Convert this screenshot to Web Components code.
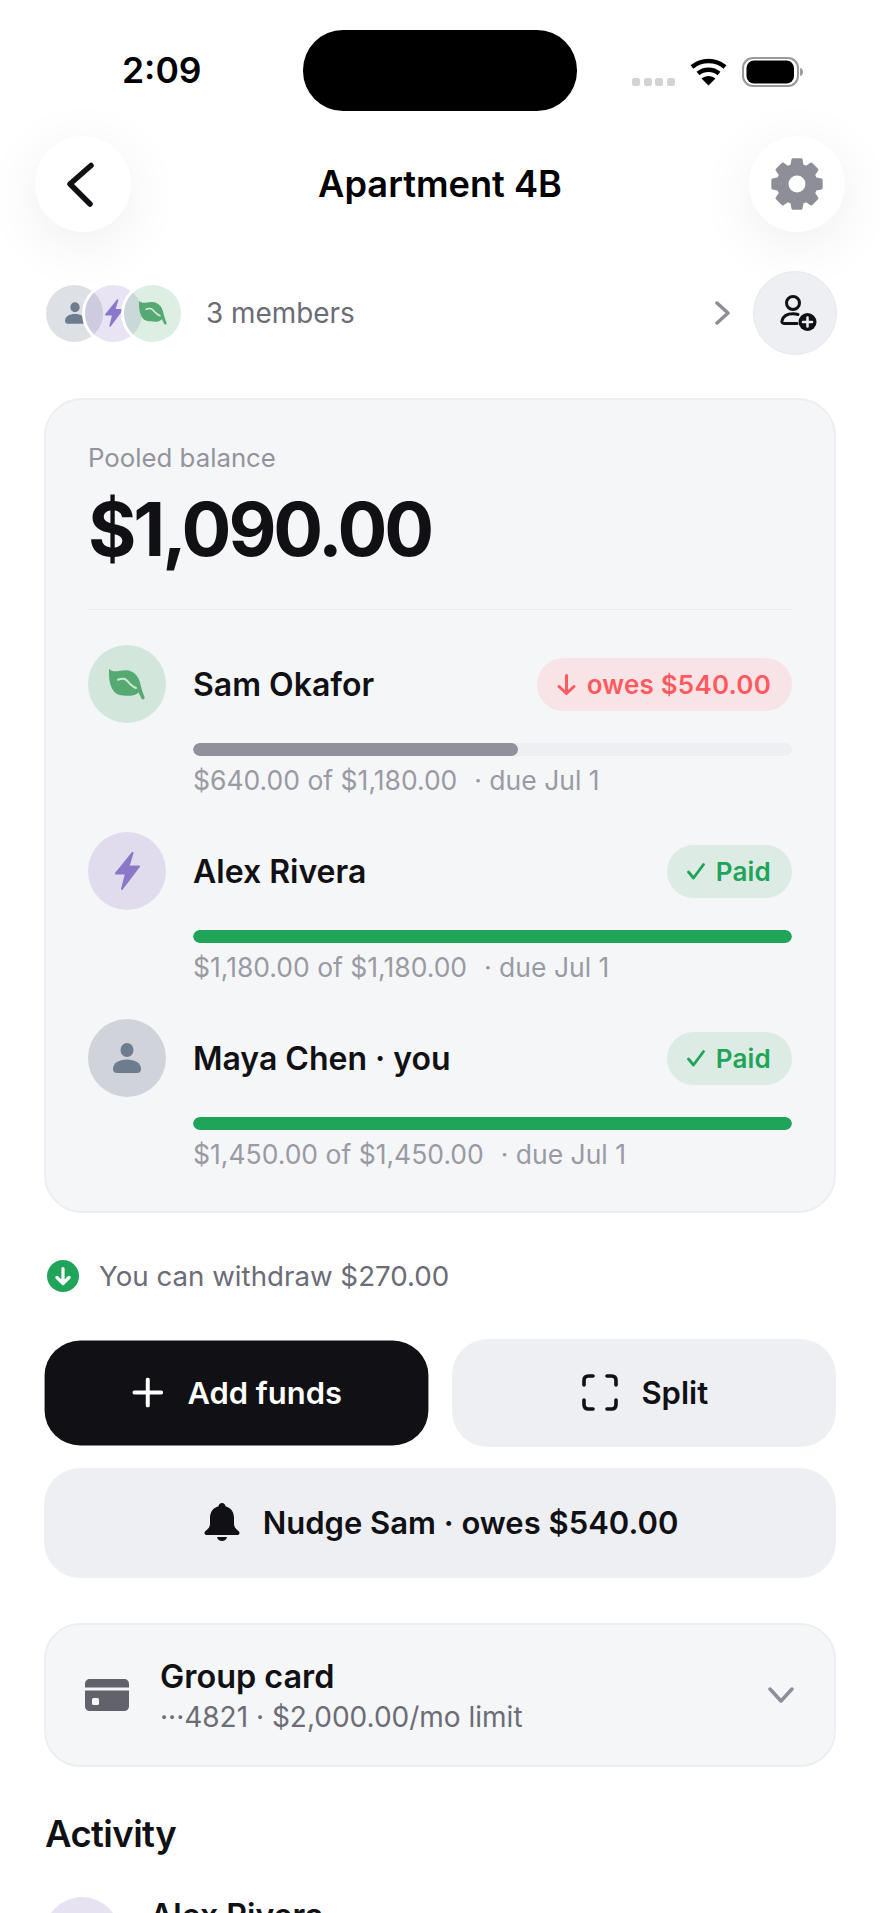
<!doctype html>
<html>
<head>
<meta charset="utf-8">
<title>Apartment 4B</title>
<style>
  html, body { margin: 0; padding: 0; background: #fff; }
  body { height: 1913px; overflow: hidden; font-family: Inter, "Liberation Sans", sans-serif; color: #111115; }
</style>
</head>
<body>
<group-screen>
  <status-bar></status-bar>
  <top-bar title="Apartment 4B"></top-bar>
  <members-row count="3 members"></members-row>
  <balance-card label="Pooled balance" amount="$1,090.00">
    <member-row name="Sam Okafor" icon="leaf" tone="green" state="owes" pill="owes $540.00" pct="54.2" sub="$640.00 of $1,180.00" due="· due Jul 1"></member-row>
    <member-row name="Alex Rivera" icon="bolt" tone="purple" state="paid" pill="Paid" pct="100" sub="$1,180.00 of $1,180.00" due="· due Jul 1"></member-row>
    <member-row name="Maya Chen · you" icon="person" tone="grey" state="paid" pill="Paid" pct="100" sub="$1,450.00 of $1,450.00" due="· due Jul 1"></member-row>
  </balance-card>
  <withdraw-note>You can withdraw $270.00</withdraw-note>
  <action-buttons></action-buttons>
  <group-card title="Group card" sub="···4821 · $2,000.00/mo limit"></group-card>
  <activity-list></activity-list>
</group-screen>

<script>
const ICONS = {
  leaf: (w, h, vein) => `<svg width="${w}" height="${h}" viewBox="0 0 36 31"><path fill="#55aa72" d="M0 0C2 1.500 4 2.300 6 2.300 9.500 2.300 13.500 1 17 1.300c7 .5 12 4.700 14 12.200 1 4 2.500 10.500 4.500 14.500.5 1.500-.5 2.500-1.500 2.500s-1.500-1-2-2l-2.500-5c-2.500 2.300-5.500 3.300-8.800 3.300-4 0-9.700-.3-12.700-1.800C3 22 0 14 0 5.700z"/><path fill="none" stroke="${vein}" stroke-width="2" stroke-linecap="round" d="M9 10.700c2.500-1 4.700-1.200 6.700-.7 2.500 1 4 4 6.300 5.700 1.500 1.300 3 2.500 5 3.300"/></svg>`,
  bolt: (w, h) => `<svg width="${w}" height="${h}" viewBox="0 0 25 38"><path fill="#8b78c8" stroke="#8b78c8" stroke-width="2" stroke-linejoin="round" d="M17.500 1 1 21.500h10L7 37 24 14.500H13.500z"/></svg>`,
  person: (w, h) => `<svg width="${w}" height="${h}" viewBox="0 0 28 30"><ellipse cx="14" cy="7" rx="6.500" ry="7" fill="#6d7c8e"/><path fill="#6d7c8e" d="M0 26C0 20 6 16.500 14 16.500S28 20 28 26c0 2.500-1.500 4-4 4H4c-2.500 0-4-1.500-4-4z"/></svg>`
};
const TONES = { green: '#d3e6db', purple: '#e0dcee', grey: '#d0d4da' };

function shadowOf(el, html) {
  el.attachShadow({ mode: 'open' }).innerHTML = html;
}

// eight chunky teeth round a centre of 27,27
function gearPath() {
  const pt = (r, deg) => {
    const t = deg * Math.PI / 180;
    return (27 + r * Math.cos(t)).toFixed(2) + ' ' + (27 + r * Math.sin(t)).toFixed(2);
  };
  let d = '';
  for (let i = 0; i < 8; i++) {
    const c = i * 45 - 90;
    d += (i ? 'L' : 'M') + pt(19, c - 16) + 'L' + pt(24.500, c - 9.500) + 'L' + pt(24.500, c + 9.500) + 'L' + pt(19, c + 16);
  }
  return d + 'Z';
}

customElements.define('group-screen', class extends HTMLElement {
  constructor() {
    super();
    shadowOf(this, `<style>
      :host { display: block; width: 880px; height: 1913px; overflow: hidden; }
    </style><slot></slot>`);
  }
});

customElements.define('status-bar', class extends HTMLElement {
  constructor() {
    super();
    shadowOf(this, `<style>
      :host { display: grid; grid-template-columns: 303px 274px 1fr; height: 81px; padding: 30px 0 25px; }
      .time { font-size: 35.500px; font-weight: 600; color: #000; padding-left: 122px; line-height: 81px; }
      .island { background: #000; border-radius: 40px; }
      .right { display: flex; align-items: flex-start; padding: 27px 0 0 55px; }
      .dots { display: flex; gap: 3.500px; margin: 21px 15px 0 0; }
      .dots i { width: 8px; height: 8px; border-radius: 2.500px; background: #d2d3d6; }
      .batt { margin-left: 15px; }
    </style>
    <div class="time">2:09</div>
    <div class="island"></div>
    <div class="right">
      <div class="dots"><i></i><i></i><i></i><i></i></div>
      <svg width="37" height="29" viewBox="0 0 37 29"><path fill="none" stroke="#000" stroke-width="4.500" d="M2 10c9.500-8 23.500-8 33 0M8 16.500c6-5 15-5 21 0"/><path d="M18.500 28.500 11.500 21.500c4-3.500 10-3.500 14 0z"/></svg>
      <svg class="batt" width="61" height="30" viewBox="0 0 61 30"><rect x="1" y="1" width="55" height="28" rx="10" fill="none" stroke="#9a9a9a" stroke-width="2"/><rect x="4.500" y="3.500" width="47.500" height="23" rx="7.500"/><path d="M58 11c2 .6 3 2 3 4s-1 3.400-3 4z" fill="#9a9a9a"/></svg>
    </div>`);
  }
});

customElements.define('top-bar', class extends HTMLElement {
  constructor() {
    super();
    shadowOf(this, `<style>
      :host { display: flex; align-items: center; justify-content: space-between; padding: 0 35px; }
      .btn { width: 96px; height: 96px; border-radius: 50%; background: #fff; display: flex; align-items: center; justify-content: center; box-shadow: 0 12px 60px rgba(0,0,0,.07); }
      h1 { margin: 0; font-size: 36.200px; font-weight: 600; color: #000; }
    </style>
    <div class="btn"><svg width="96" height="96" viewBox="0 0 96 96"><path fill="none" stroke="#111115" stroke-width="5.500" stroke-linecap="round" stroke-linejoin="round" d="M56 29.500 35 48l20 20"/></svg></div>
    <h1>${this.getAttribute('title')}</h1>
    <div class="btn"><svg width="54" height="54" viewBox="0 0 54 54"><path fill="#8e8e98" stroke="#8e8e98" stroke-width="3" stroke-linejoin="round" d="${gearPath()}"/><circle cx="27" cy="27" r="8.500" fill="#fff"/></svg></div>`);
  }
});

customElements.define('members-row', class extends HTMLElement {
  constructor() {
    super();
    shadowOf(this, `<style>
      :host { display: flex; align-items: center; margin-top: 39px; padding: 0 43px 0 46px; height: 84px; }
      .stack { display: flex; }
      .av { width: 57px; height: 57px; border-radius: 50%; display: flex; align-items: center; justify-content: center; box-shadow: 0 0 0 3px #fff; flex: none; }
      .av + .av { margin-left: -18px; }
      .a { background: rgba(100,116,135,.22); }
      .b { background: rgba(139,120,200,.2); }
      .c { background: rgba(85,170,114,.2); }
      .label { margin-left: 25px; font-size: 27.900px; color: #6c6c77; flex: 1; }
      .add { width: 84px; height: 84px; border-radius: 50%; background: #eeeff3; border: 1px solid #e7e8ed; box-sizing: border-box; display: flex; align-items: center; justify-content: center; margin-left: 23px; }
      .add svg { margin-left: 5px; }
    </style>
    <div class="stack">
      <div class="av a">${ICONS.person(20, 22)}</div>
      <div class="av b">${ICONS.bolt(18, 28)}</div>
      <div class="av c">${ICONS.leaf(28, 24, '#dcece2')}</div>
    </div>
    <div class="label">${this.getAttribute('count')}</div>
    <svg width="15" height="24" viewBox="0 0 15 24"><path fill="none" stroke="#8e8e98" stroke-width="3.500" stroke-linecap="round" stroke-linejoin="round" d="M2 2l11 10L2 22"/></svg>
    <div class="add"><svg width="40" height="38" viewBox="0 0 40 38"><circle cx="15" cy="9" r="6.500" fill="none" stroke="#111115" stroke-width="3"/><path fill="none" stroke="#111115" stroke-width="3" stroke-linecap="round" d="M20 20.500c-1.500-.5-3-.8-5-.8-6 0-10 3-11 7-.5 1.500.5 2.800 2 2.800h13"/><circle cx="29.500" cy="28" r="9" fill="#111115"/><path stroke="#eeeff3" stroke-width="2.500" stroke-linecap="round" d="M29.500 23.500v9M25 28h9"/></svg></div>`);
  }
});

customElements.define('balance-card', class extends HTMLElement {
  constructor() {
    super();
    shadowOf(this, `<style>
      :host { display: block; margin: 43px 44px 0; box-sizing: border-box; height: 815px; background: #f5f6f8; border: 2px solid #eceef1; border-radius: 38px; padding: 43px 42px 0; }
      .label { font-size: 25.800px; line-height: 30px; color: #93939d; }
      .amount { font-size: 74px; line-height: 90px; font-weight: 650; letter-spacing: -3.100px; color: #111115; margin-top: 11px; }
      hr { border: 0; height: 1px; background: #e9eaee; margin: 35px 0 35px; }
      .list { display: flex; flex-direction: column; gap: 37px; }
    </style>
    <div class="label">${this.getAttribute('label')}</div>
    <div class="amount">${this.getAttribute('amount')}</div>
    <hr>
    <div class="list"><slot></slot></div>`);
  }
});

customElements.define('member-row', class extends HTMLElement {
  constructor() {
    super();
    const a = n => this.getAttribute(n);
    const owes = a('state') === 'owes';
    const mark = owes
      ? `<svg width="19" height="21" viewBox="0 0 19 21"><path fill="none" stroke="#ff5a60" stroke-width="3" stroke-linecap="round" stroke-linejoin="round" d="M9.500 1.500v18M2 12.500l7.500 7 7.500-7"/></svg>`
      : `<svg width="18" height="17" viewBox="0 0 18 17"><path fill="none" stroke="#1fa45a" stroke-width="2.800" stroke-linecap="round" stroke-linejoin="round" d="M1.500 9l5 6L16.500 1.500"/></svg>`;
    const icon = a('icon') === 'leaf' ? ICONS.leaf(36, 31, '#d3e6db') : a('icon') === 'bolt' ? ICONS.bolt(25, 38) : ICONS.person(28, 30);
    shadowOf(this, `<style>
      :host { display: grid; grid-template-columns: 78px 1fr auto; column-gap: 27px; align-items: center; }
      .av { width: 78px; height: 78px; border-radius: 50%; display: flex; align-items: center; justify-content: center; background: ${TONES[a('tone')]}; }
      .name { font-size: 32px; font-weight: 600; color: #111115; }
      .pill { display: flex; align-items: center; gap: 11px; height: 53px; padding: 0 21px 0 20px; border-radius: 27px; font-size: 26px; font-weight: 600; letter-spacing: .2px;
        color: ${owes ? '#ff5a60' : '#1fa45a'}; background: ${owes ? '#f8e4e6' : '#dcece4'}; }
      .track { grid-column: 2 / 4; height: 13px; border-radius: 7px; background: #eeeff3; margin-top: 20px; overflow: hidden; }
      .fill { height: 100%; border-radius: 7px; width: ${a('pct')}%; background: ${owes ? '#91919c' : '#1fa45a'}; }
      .sub { grid-column: 2 / 4; margin-top: 9px; font-size: 26.500px; line-height: 30px; color: #9a9aa4; white-space: pre; }
      .sub span { margin-left: 2px; }
    </style>
    <div class="av">${icon}</div>
    <div class="name">${a('name')}</div>
    <div class="pill">${mark}<span>${a('pill')}</span></div>
    <div class="track"><div class="fill"></div></div>
    <div class="sub">${a('sub')}  <span>${a('due')}</span></div>`);
  }
});

customElements.define('withdraw-note', class extends HTMLElement {
  constructor() {
    super();
    shadowOf(this, `<style>
      :host { display: flex; align-items: center; gap: 20px; margin: 46px 44px 0 47px; height: 34px; font-size: 27.700px; color: #6c6c77; }
      svg { flex: none; }
    </style>
    <svg width="32" height="32" viewBox="0 0 32 32"><circle cx="16" cy="16" r="16" fill="#1fa45a"/><path fill="none" stroke="#fff" stroke-width="3.200" stroke-linecap="round" stroke-linejoin="round" d="M16 8.500v14.500M10 17.500l6 6 6-6"/></svg>
    <slot></slot>`);
  }
});

customElements.define('action-buttons', class extends HTMLElement {
  constructor() {
    super();
    shadowOf(this, `<style>
      :host { display: grid; grid-template-columns: 1fr 1fr; column-gap: 23px; row-gap: 21px; margin: 46px 44px 0; }
      .b { display: flex; align-items: center; justify-content: center; box-sizing: border-box; padding-bottom: 2px; border-radius: 36px; background: #eeeff3; color: #111115; font-size: 31px; font-weight: 600; height: 108px; }
      .p { background: #111115; color: #fff; transform: scale(.997, .972); gap: 24px; padding-left: 2px; }
      .s { gap: 23px; padding-left: 3px; }
      .n { grid-column: 1 / 3; height: 110px; gap: 23px; padding-left: 2px; }
    </style>
    <div class="b p"><svg width="31" height="31" viewBox="0 0 31 31"><path stroke="#fff" stroke-width="4" stroke-linecap="round" d="M15.500 2v27M2 15.500h27"/></svg>Add funds</div>
    <div class="b s"><svg width="36" height="37" viewBox="0 0 36 37"><path fill="none" stroke="#111115" stroke-width="3.600" stroke-linecap="round" stroke-linejoin="round" d="M2 11V6.500C2 3.500 3.500 2 6.500 2H11M25 2h4.500C32.500 2 34 3.500 34 6.500V11M34 26v4.500c0 3-1.500 4.500-4.500 4.500H25M11 35H6.500C3.500 35 2 33.500 2 30.500V26"/></svg>Split</div>
    <div class="b n"><svg width="36" height="38" viewBox="0 0 36 38"><path fill="#111115" d="M18 0c2 0 3.300 1.300 3.500 3.200C27 4.700 30 9 30 15v6c0 3 2 5 4.500 7 1.500 1.200 1.500 4-1 4H2.500c-2.500 0-2.500-2.800-1-4C4 26 6 24 6 21v-6C6 9 9 4.700 14.500 3.200 14.700 1.300 16 0 18 0zM13 34h10c-.5 2.500-2.500 4-5 4s-4.500-1.500-5-4z"/></svg>Nudge Sam · owes $540.00</div>`);
  }
});

customElements.define('group-card', class extends HTMLElement {
  constructor() {
    super();
    shadowOf(this, `<style>
      :host { display: flex; align-items: center; box-sizing: border-box; height: 144px; margin: 45px 44px 0; padding: 0 40px 0 39px; background: #f5f6f8; border: 2px solid #eceef1; border-radius: 36px; }
      .t { flex: 1; margin-left: 31px; }
      .h { font-size: 32.400px; line-height: 40px; font-weight: 600; color: #111115; }
      .s { font-size: 28px; line-height: 34px; margin-top: 3px; color: #6c6c77; }
    </style>
    <svg width="44" height="32" viewBox="0 0 44 32"><path fill="#62626c" d="M5 0h34c3 0 5 2 5 5v3.500H0V5c0-3 2-5 5-5zM0 11.500h44V27c0 3-2 5-5 5H5c-3 0-5-2-5-5z"/><rect x="7" y="19" width="7" height="7" rx="1.500" fill="#f5f6f8"/></svg>
    <div class="t"><div class="h">${this.getAttribute('title')}</div><div class="s">${this.getAttribute('sub')}</div></div>
    <svg width="26" height="16" viewBox="0 0 26 16"><path fill="none" stroke="#8e8e98" stroke-width="3.500" stroke-linecap="round" stroke-linejoin="round" d="M2 2l11 12L24 2"/></svg>`);
  }
});

customElements.define('activity-list', class extends HTMLElement {
  constructor() {
    super();
    shadowOf(this, `<style>
      :host { display: block; margin: 45px 44px 0; }
      h2 { margin: 0; font-size: 36.500px; line-height: 44px; font-weight: 600; letter-spacing: -.6px; color: #111115; margin-left: 1px; }
      .row { display: flex; align-items: flex-start; gap: 30px; margin-top: 41px; }
      .av { width: 76px; height: 76px; border-radius: 50%; background: #e6e2f2; flex: none; display: flex; align-items: center; justify-content: center; }
      .n { font-size: 32px; font-weight: 600; line-height: 36px; margin-top: 1px; }
    </style>
    <h2>Activity</h2>
    <div class="row"><div class="av">${ICONS.bolt(24, 36)}</div><div class="n">Alex Rivera</div></div>`);
  }
});
</script>
</body>
</html>
